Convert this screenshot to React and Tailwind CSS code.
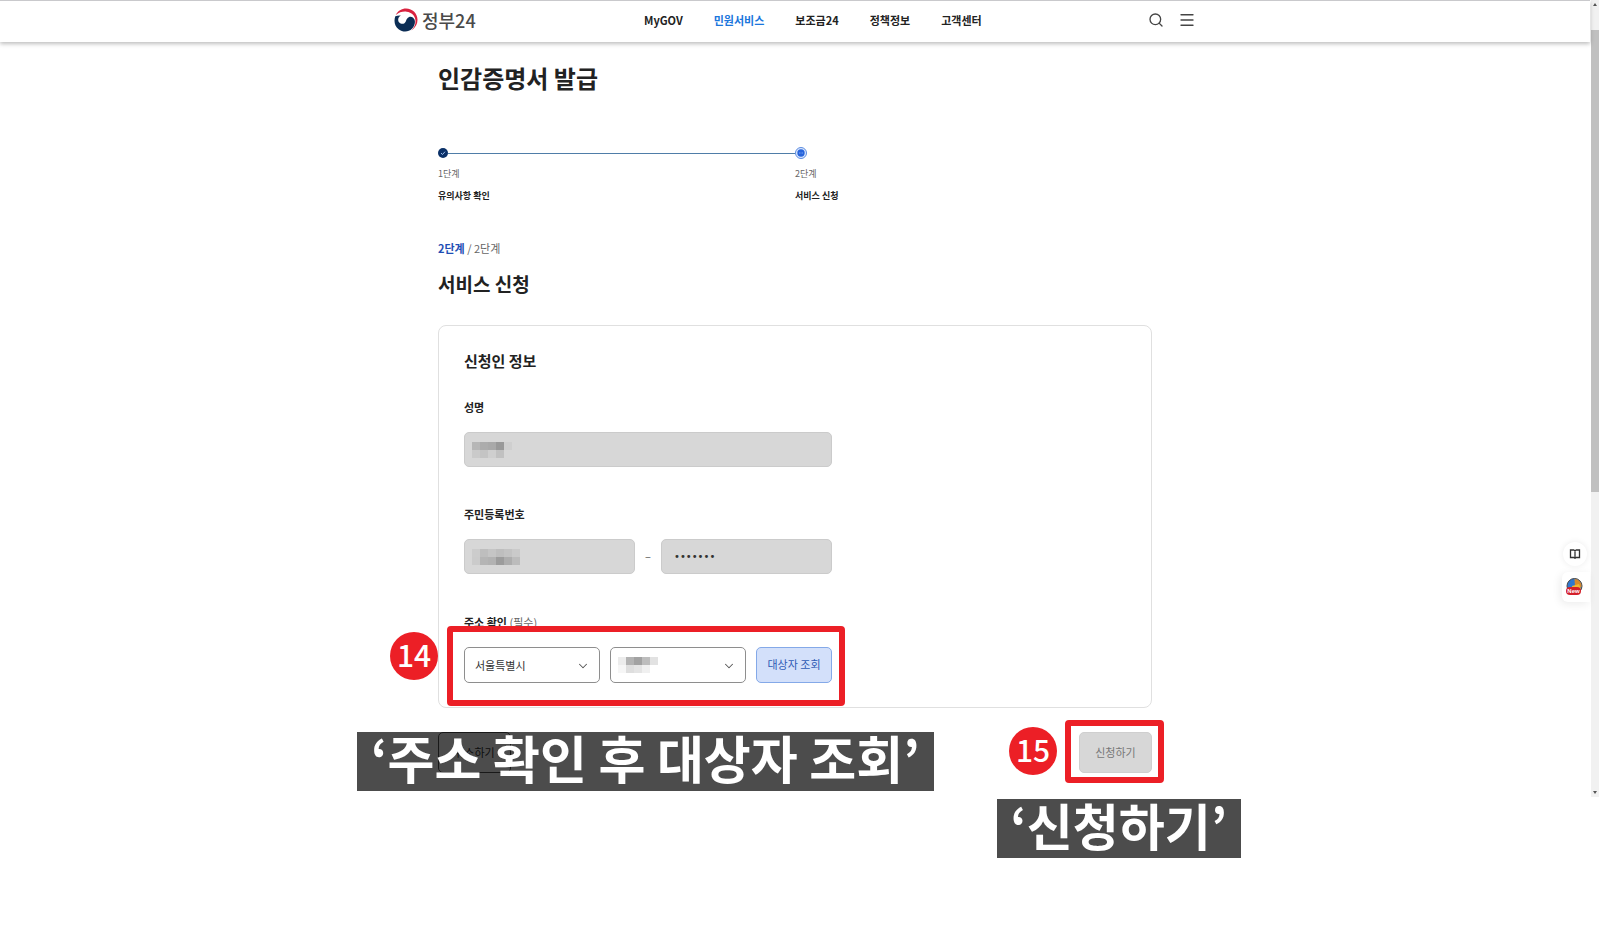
import React, { useState } from "react";
import { ChevronDown, Menu, Search } from "lucide-react";

const navItems = [
  { name: "MyGOV", href: "#mygov" },
  { name: "민원서비스", href: "#service", active: true },
  { name: "보조금24", href: "#subsidy" },
  { name: "정책정보", href: "#policy" },
  { name: "고객센터", href: "#support" },
];

// grey shades of each masked value, row by row
const maskedName = [
  ["#b6b6b6", "#acacac", "#a9a9a9", "#999999", "#cfcfcf"],
  ["#cacaca", "#c4c4c4", "#cfcfcf", "#c1c1c1", "#d7d7d7"],
];
const maskedBirth = [
  ["#cccccc", "#bebebe", "#c5c5c5", "#bebebe", "#c3c3c3", "#cacaca"],
  ["#cbcbcb", "#b5b5b5", "#b2b2b2", "#9c9c9c", "#adadad", "#bcbcbc"],
];
const maskedDistrict = [
  ["#ececec", "#b3b3b3", "#a2a2a2", "#bdbdbd", "#e2e2e2"],
  ["#f6f6f6", "#dedede", "#e4e4e4", "#f0f0f0", "#ffffff"],
];

function Mosaic({ rows }) {
  return (
    <svg
      className="absolute left-2 top-2.5 pointer-events-none"
      width={rows[0].length * 8}
      height={rows.length * 8}
      shapeRendering="crispEdges"
      aria-hidden="true"
    >
      {rows.map((row, y) =>
        row.map((fill, x) => <rect key={`${x}-${y}`} x={x * 8} y={y * 8} width="8" height="8" fill={fill} />)
      )}
    </svg>
  );
}

function Logo() {
  return (
    <a href="#home" className="flex items-center gap-1">
      <svg className="w-6 h-6" viewBox="0 0 24 24" aria-hidden="true">
        <path
          d="M1.800 7C3.800 2.800 7.800.5 12 .5c6.600 0 11.500 5 11.500 11.300 0 4.400-2.200 8.200-6 10.700 2.800-3 4.300-6.200 4-9.900C21.100 7.600 17.600 4.200 12.600 3.700 8.500 3.300 5 4.400 1.800 7Z"
          fill="#d9223f"
        />
        <path
          d="M1.300 8.300C-.4 13 .6 18 4.600 21.200c4.200 3.300 10 3 13.400-.4 2.600-2.600 3.600-6.300 2.500-9.200-.9-2.200-3.200-3.400-5.300-2.700-2 .6-2.600 2.300-3.300 4.300-.9 2.300-3.100 3.200-5.300 2.200-2.200-1-3-3.400-2-5.600.5-1 1.200-1.700 2.200-2.200-2-.1-4 .1-5.500.7Z"
          fill="#0b2d55"
        />
      </svg>
      <span className="text-[18px] leading-6 font-medium text-[#4a4a4a]">정부24</span>
    </a>
  );
}

function Header() {
  return (
    <header className="relative z-10 h-[42px] pb-1 bg-white border-t border-[#c9c9cc] shadow-[0_2px_4px_rgba(0,0,0,0.25)]">
      <div className="relative max-w-[802px] h-full mx-auto flex items-center justify-between">
        <Logo />
        <nav className="absolute left-[250px] flex gap-[31px]">
          {navItems.map((item) => (
            <a
              key={item.name}
              href={item.href}
              className={`text-[11px] leading-4 font-bold ${item.active ? "text-[#1a76dc]" : "text-[#222]"}`}
            >
              {item.name}
            </a>
          ))}
        </nav>
        <div className="flex gap-3.5">
          <button type="button" aria-label="검색">
            <Search className="w-4 h-4 text-[#444]" strokeWidth={2} />
          </button>
          <button type="button" aria-label="전체메뉴">
            <Menu className="w-[18px] h-[18px] text-[#444]" strokeWidth={1.75} />
          </button>
        </div>
      </div>
    </header>
  );
}

function Stepper() {
  return (
    <ol className="mt-12 flex">
      <li className="flex-1">
        <div className="h-[18px] flex items-center">
          <svg className="w-2.5 h-2.5" viewBox="0 0 10 10" aria-hidden="true">
            <circle cx="5" cy="5" r="5" fill="#0b3168" />
            <path d="M3 5.100 4.500 6.500 7 3.700" fill="none" stroke="#9fc0ee" strokeWidth="1" />
          </svg>
          <span className="flex-1 h-px bg-[#4f7da8]" />
        </div>
        <p className="mt-1 text-[9px] leading-4 text-[#666]">1단계</p>
        <p className="mt-1.5 text-[9px] leading-4 font-bold text-[#222]">유의사항 확인</p>
      </li>
      <li className="flex-1">
        <div className="h-[18px] flex items-center">
          <svg className="w-3 h-3" viewBox="0 0 12 12" aria-hidden="true">
            <circle cx="6" cy="6" r="5.500" fill="#dce8fd" stroke="#5b8be0" strokeWidth="1" />
            <circle cx="6" cy="6" r="3.700" fill="#2563dc" />
            <path d="M4 6h4" stroke="#8fb3f5" strokeWidth=".8" strokeDasharray="1 .5" />
          </svg>
        </div>
        <p className="mt-1 text-[9px] leading-4 text-[#666]">2단계</p>
        <p className="mt-1.5 text-[9px] leading-4 font-bold text-[#222]">서비스 신청</p>
      </li>
    </ol>
  );
}

function Badge({ children, className }) {
  return (
    <span
      className={`absolute w-12 h-12 rounded-full bg-[#ec1f26] text-white text-[30px] leading-[44px] font-medium text-center ${className}`}
    >
      {children}
    </span>
  );
}

function Caption({ children, className }) {
  return (
    <p
      className={`absolute h-[59px] px-3.5 bg-black/70 text-white leading-[50px] font-bold whitespace-nowrap ${className}`}
    >
      {children}
    </p>
  );
}

const labelClass = "block text-[11px] leading-[18px] font-bold text-[#222]";
const fieldClass = "w-full h-[35px] px-3 rounded-[5px] border border-[#cbcbcb] bg-[#d7d7d7] text-[#333]";
const selectClass =
  "block w-full h-9 px-2.5 appearance-none rounded-[5px] border border-[#8e8e8e] bg-white text-[11px] text-[#333]";

function ApplicantCard() {
  const [city, setCity] = useState("서울특별시");

  return (
    <section className="mt-[26px] px-[25px] pt-[23px] pb-6 rounded-lg border border-[#e0e0e0]">
      <h3 className="text-[15px] leading-6 font-bold text-[#222]">신청인 정보</h3>

      <div className="mt-[25px] max-w-[368px]">
        <label htmlFor="name" className={labelClass}>성명</label>
        <div className="relative mt-4">
          <input id="name" type="text" disabled className={`block ${fieldClass}`} />
          <Mosaic rows={maskedName} />
        </div>

        <label htmlFor="birth" className={`mt-[38px] ${labelClass}`}>주민등록번호</label>
        <div className="mt-4 flex items-center">
          <div className="relative flex-1">
            <input id="birth" type="text" disabled className={`block ${fieldClass}`} />
            <Mosaic rows={maskedBirth} />
          </div>
          <span className="w-[26px] text-center text-[11px] text-[#555]">–</span>
          <div className="flex-1">
            <input
              type="password"
              value="0000000"
              readOnly
              aria-label="주민등록번호 뒷자리"
              className={`block font-['DejaVu_Sans'] text-[10px] ${fieldClass}`}
            />
          </div>
        </div>

        <label htmlFor="city" className={`mt-[39px] ${labelClass}`}>
          주소 확인 <span className="font-normal text-[#666]">(필수)</span>
        </label>
        <div className="relative mt-4 flex gap-2.5">
          <div className="relative flex-1">
            <select id="city" value={city} onChange={(e) => setCity(e.target.value)} className={selectClass}>
              <option>서울특별시</option>
            </select>
            <ChevronDown className="absolute right-2.5 top-3 w-3.5 h-3.5 text-[#555] pointer-events-none" strokeWidth={1.75} />
          </div>
          <div className="relative flex-1">
            <select aria-label="시군구" className={selectClass} />
            <Mosaic rows={maskedDistrict} />
            <ChevronDown className="absolute right-2.5 top-3 w-3.5 h-3.5 text-[#555] pointer-events-none" strokeWidth={1.75} />
          </div>
          <button
            type="button"
            className="w-19 h-9 pb-0.5 rounded-[5px] border border-[#84a9e8] bg-[#d3e0fa] text-[11px] text-[#2f5bb5]"
          >
            대상자 조회
          </button>
          <div className="absolute -left-[17px] -right-[13px] -top-[21px] -bottom-[23px] rounded-sm border-6 border-[#ec1f26] pointer-events-none" />
          <Badge className="-left-[74px] -top-[15px]">14</Badge>
        </div>
      </div>
    </section>
  );
}

function Actions() {
  return (
    <div className="relative mt-6 flex justify-between">
      <button type="button" className="w-[73px] h-[41px] rounded-[5px] border border-[#555] text-[11px] text-[#333]">
        취소하기
      </button>
      <div className="relative">
        <button
          type="button"
          className="block w-[73px] h-[41px] rounded-[5px] border border-[#cfcfcf] bg-[#d7d7d7] text-[11px] text-[#777]"
        >
          신청하기
        </button>
        <div className="absolute -left-3.5 -right-3 -top-3 -bottom-2.5 rounded-sm border-6 border-[#ec1f26] pointer-events-none" />
      </div>
      <Badge className="right-[95px] -top-[5px]">15</Badge>
      <Caption className="-left-[81px] top-0 text-[51px]">‘주소 확인 후 대상자 조회’</Caption>
      <Caption className="-right-[89px] top-[67px] text-[50px]">‘신청하기’</Caption>
    </div>
  );
}

function QuickButtons() {
  return (
    <div className="absolute right-0 top-[542px] flex flex-col items-end gap-1.5">
      <button
        type="button"
        aria-label="안내"
        className="mr-[3px] w-6 h-6 flex items-center justify-center rounded-full bg-white shadow-[0_0_6px_rgba(0,0,0,0.08)]"
      >
        <svg className="w-3 h-3" viewBox="0 0 12 12" fill="none" stroke="#333" strokeWidth="1.300" aria-hidden="true">
          <path d="M1.500 2h3.200L6 2.800 7.300 2h3.200v7.500H7.300L6 10.300l-1.300-.8H1.500ZM6 2.800v7.500" />
        </svg>
      </button>
      <button
        type="button"
        aria-label="새 소식"
        className="w-7 h-[30px] flex items-center justify-center rounded-l-md bg-white shadow-[-2px_2px_8px_rgba(0,0,0,0.08)]"
      >
        <svg className="w-[18px] h-[18px] mr-1" viewBox="0 0 18 18" aria-hidden="true">
          <circle cx="9.500" cy="8" r="7.500" fill="#2f77d0" stroke="#444" strokeWidth="1" />
          <path d="M9.500 1A7 7 0 0 1 16.500 9L10 9Z" fill="#d98a2b" />
          <path d="M7 8 14 6l2 5H7Z" fill="#f2b632" />
          <rect x="1" y="9" width="15" height="8" rx="4" fill="#d3202b" />
          <text x="8.500" y="15" fontSize="6" fontWeight="700" fill="#fff" textAnchor="middle" fontFamily="Liberation Sans, sans-serif">
            New
          </text>
        </svg>
      </button>
    </div>
  );
}

function ScrollRail() {
  return (
    <div className="w-2 mr-px pt-[3px] pb-[3px] flex flex-col items-center bg-[#f1f1f1]" aria-hidden="true">
      <svg className="w-1 h-[3px]" viewBox="0 0 4 3"><path d="M0 3 2 0l2 3Z" fill="#555" /></svg>
      <div className="mt-6 w-full h-[462px] bg-[#c0c0c0]" />
      <svg className="mt-auto w-1 h-[3px]" viewBox="0 0 4 3"><path d="M0 0h4L2 3Z" fill="#555" /></svg>
    </div>
  );
}

export default function App() {
  return (
    <div className="min-h-screen bg-white font-['Noto_Sans_CJK_KR',sans-serif]">
      <div className="flex">
        <div className="relative flex-1 mr-px pb-6">
          <Header />
          <main className="max-w-[714px] mx-auto pt-[18px]">
            <h1 className="text-[24px] leading-9 font-bold text-[#222]">인감증명서 발급</h1>
            <Stepper />
            <p className="mt-[35px] text-[11px] leading-[18px] text-[#666]">
              <strong className="font-bold text-[#1f4fb5]">2단계</strong> / 2단계
            </p>
            <h2 className="mt-3 text-[19px] leading-[30px] font-bold text-[#222]">서비스 신청</h2>
            <ApplicantCard />
            <Actions />
          </main>
          <QuickButtons />
        </div>
        <ScrollRail />
      </div>
    </div>
  );
}
